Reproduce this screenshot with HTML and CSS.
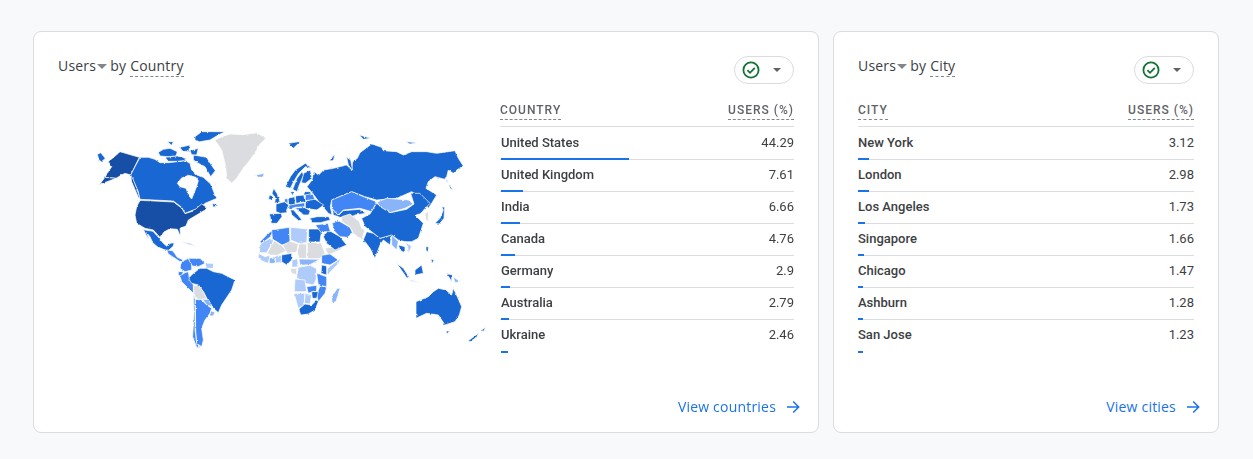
FILE: index.html
```html
<!DOCTYPE html>
<html lang="en">
  <head>
    <meta charset="UTF-8" />
    <title>Users by Country</title>
    <link rel="stylesheet" href="styles.css">
  </head>
  <body>
    <div class="container">
      <section class="card card-country">
        <div class="card-head">
          <div class="card-title">
            <span>Users</span><span class="title-caret"></span><span class="title-by">by</span><span class="dashed">Country</span>
          </div>
          <div class="status-chip">
            <svg class="status-check" width="18" height="18" viewBox="0 0 18 18">
              <circle cx="9" cy="9" r="7.6" fill="none" stroke="#137333" stroke-width="1.8" />
              <path d="M5.4 9.2l2.6 2.6 4.8-5" fill="none" stroke="#137333" stroke-width="1.8" />
            </svg>
            <span class="chip-caret"></span>
          </div>
        </div>
        <div class="card-body">
          <svg class="world-map" width="434" height="260" viewBox="58 100 434 260">
            <defs>
              <filter id="coast" x="-3%" y="-3%" width="106%" height="106%" color-interpolation-filters="sRGB">
                <feTurbulence type="fractalNoise" baseFrequency="0.3" numOctaves="2" seed="4" />
                <feDisplacementMap in="SourceGraphic" scale="2.2" xChannelSelector="R" yChannelSelector="G" />
              </filter>
            </defs>
            <g filter="url(#coast)">
            <!-- north america -->
            <g transform="translate(90 120) scale(0.33333)">
              <path class="c-dark" d="M90 95L148 112 122 165 105 160 95 165 78 175 45 172 55 155 65 140 55 125 85 100Z" />
              <path class="c-dark" d="M122 165L128 170 150 235 145 232 125 185Z" />
              <path class="c-dark" d="M45 172L78 175 28 194Z" />
              <path class="c-main" d="M22 103L32 98 46 115 34 126 26 118Z" />
              <path class="c-main" d="M150 112L175 112 195 118 210 128 235 128 262 125 285 122 300 130 305 150 322 166 340 172 362 192 375 225 381 235 345 250 330 265 310 270 285 280 275 262 250 243 150 238 145 215 130 180 122 165ZM262 190L270 200 288 205 295 225 305 237 318 205 325 182 318 172 295 166 275 174Z" fill-rule="evenodd" />
              <path class="c-main" d="M315 50L335 35 405 35 385 45 360 60 325 66 315 60Z" />
              <path class="c-main" d="M205 97L220 88 240 85 262 95 258 108 232 110 210 108Z" />
              <path class="c-main" d="M225 112L262 108 290 116 280 122 262 124 235 124Z" />
              <path class="c-main" d="M310 105L350 112 362 132 376 152 362 170 345 140 322 128 310 120Z" />
              <path class="c-main" d="M232 65L250 65 245 76Z" />
              <path class="c-main" d="M270 82L300 75 296 95 276 92Z" />
              <path class="c-main" d="M300 92L325 85 320 105 305 104Z" />
              <path class="c-main" d="M366 250L385 256 370 262Z" />
              <path class="c-gray" d="M375 60L395 50 420 42 460 44 500 38 528 55 510 72 500 90 480 120 460 145 440 175 425 190 410 175 408 150 405 130 395 90Z" />
              <path class="c-light" d="M498 165L522 160 520 170 505 172Z" />
              <path class="c-dark" d="M150 241L250 246 275 264 285 281 310 273 335 252 350 262 345 270 320 285 295 300 288 318 270 325 272 350 262 328 240 326 222 336 210 352 190 330 165 325 140 310 135 285 140 260Z" />
            </g>
            <!-- central and south america, africa -->
            <g transform="translate(150 230) scale(0.33333)">
              <path class="c-main" d="M-15 0L9 4 28 25 40 40 52 50 60 40 72 38 70 48 55 62 40 58 22 50 8 38 0 20-10 8-2 30-12 14-20 -2Z" />
              <path class="c-mid" d="M50 60L68 62 82 82 100 90 92 96 75 85 55 72Z" />
              <path class="c-pale" d="M88 34L120 38 142 50 118 46Z" />
              <path class="c-mid" d="M95 95L115 85 125 105 125 120 105 125 90 115Z" />
              <path class="c-mid" d="M115 85L150 85 165 100 145 110 127 108Z" />
              <path class="c-soft" d="M165 100L190 100 190 115 170 115Z" />
              <path class="c-mid" d="M85 125L100 125 95 140 85 135Z" />
              <path class="c-mid" d="M90 138L105 128 115 125 118 145 130 165 130 190 115 175 95 155Z" />
              <path class="c-main" d="M115 145L130 130 150 115 170 115 190 125 215 130 235 140 255 150 250 165 245 180 225 210 215 225 205 248 190 235 180 220 170 205 160 185 145 165 125 160Z" />
              <path class="c-gray" d="M130 170L145 165 160 185 170 205 155 210 135 205Z" />
              <path class="c-light" d="M158 208L175 208 187 230 170 225Z" />
              <path class="c-mid" d="M136 208L155 210 170 225 185 235 180 250 165 270 155 295 160 330 155 350 140 340 137 300Z" />
              <path class="c-mid" d="M130 190L135 208 135 300 140 340 152 355 170 357 140 352 128 320 132 250Z" />
              <path class="c-light" d="M182 243L195 245 190 258 180 258Z" />

              <path class="c-mid" d="M330 35L355 10 372 -2 362 20 335 40Z" />
              <path class="c-soft" d="M330 42L360 25 370 35 350 68 328 68Z" />
              <path class="c-mid" d="M365 0L418 -8 420 38 396 45 367 27Z" />
              <path class="c-soft" d="M422 -8L473 -3 470 38 446 40 422 30Z" />
              <path class="c-main" d="M476 -3L515 -3 510 36 476 36Z" />
              <path class="c-gray" d="M372 32L395 47 410 62 382 76 360 75 352 70Z" />
              <path class="c-gray" d="M398 46L420 34 445 42 440 66 412 70Z" />
              <path class="c-gray" d="M447 42L470 42 470 85 447 85 442 66Z" />
              <path class="c-gray" d="M472 38L513 38 525 70 510 86 472 86Z" />
              <path class="c-gray" d="M525 55L582 45 570 60 535 75Z" />
              <path class="c-soft" d="M325 70L345 80 360 76 355 100 340 95 325 85Z" />
              <path class="c-light" d="M358 85L375 80 375 100 358 100Z" />
              <path class="c-soft" d="M376 78L394 76 394 96 376 100Z" />
              <path class="c-main" d="M395 75L425 70 425 90 410 105 395 95Z" />
              <path class="c-soft" d="M426 90L442 86 446 110 426 112Z" />
              <path class="c-light" d="M447 87L510 88 480 104 450 106Z" />
              <path class="c-mid" d="M515 76L540 72 565 90 540 105 515 100Z" />
              <path class="c-soft" d="M545 105L572 85 566 100 532 135 532 116Z" />
              <path class="c-main" d="M515 105L530 108 530 135 513 130Z" />
              <path class="c-gray" d="M420 115L440 115 440 135 425 130Z" />
              <path class="c-soft" d="M445 112L480 106 500 116 498 150 490 165 465 160 440 145Z" />
              <path class="c-mid" d="M500 130L530 140 530 170 505 165Z" />
              <path class="c-soft" d="M435 147L465 150 470 185 433 185Z" />
              <path class="c-mid" d="M470 170L500 166 500 180 475 190Z" />
              <path class="c-mid" d="M510 167L530 172 525 190 505 215 500 195Z" />
              <path class="c-soft" d="M432 190L465 190 462 225 445 235Z" />
              <path class="c-soft" d="M466 190L485 195 480 222 463 220Z" />
              <path class="c-main" d="M485 185L505 185 500 205 487 205Z" />
              <path class="c-main" d="M447 237L465 222 485 225 500 210 505 215 495 240 475 252 452 255Z" />
              <path class="c-light" d="M562 175L570 175 558 215 546 218 545 200Z" />
              <path class="c-main" d="M520 20L535 0 570 20 590 45 555 60 530 40Z" />
            </g>
            <!-- russia and central asia -->
            <g transform="translate(280 120) scale(0.33333)">
              <path class="c-main" d="M81 200L96 180 101 155 116 165 130 150 160 145 200 135 215 150 218 125 232 115 240 98 275 72 305 82 310 92 350 95 370 105 395 95 440 95 470 100 525 92 535 115 550 138 530 150 520 160 505 150 500 170 495 175 505 190 520 212 510 205 502 180 465 170 445 185 438 205 470 225 455 250 445 265 420 230 395 215 350 235 290 240 255 230 215 215 155 240 151 260 156 285 145 280 120 250 98 220Z" />
              <path class="c-main" d="M148 122L180 84 165 102 160 122Z" />
              <path class="c-main" d="M200 112L212 120 218 152 205 135Z" />
              <path class="c-main" d="M25 70L62 64 40 85Z" />
              <path class="c-main" d="M238 45L272 55 250 58Z" />
              <path class="c-main" d="M378 65L412 68 390 72Z" />
              <path class="c-mid" d="M155 240L215 215 255 232 290 245 275 275 240 265 190 270 175 285 155 265Z" />
              <path class="c-main" d="M158 268L175 287 190 272 238 268 258 280 225 285 205 296 180 292 160 285Z" />
            </g>
            <!-- europe -->
            <g transform="translate(262 160) scale(0.33333)">
              <path class="c-main" d="M35 85L45 100 55 125 38 130 40 115 30 100Z" />
              <path class="c-main" d="M22 105L32 108 30 120 20 118Z" />
              <path class="c-main" d="M22 162L58 160 60 170 45 190 28 190Z" />
              <path class="c-main" d="M42 132L68 125 80 135 74 150 75 158 55 160 42 155Z" />
              <path class="c-main" d="M78 115L98 110 100 135 80 135Z" />
              <path class="c-mid" d="M67 118L77 115 78 130 69 127Z" />
              <path class="c-main" d="M100 108L125 105 130 125 102 130Z" />
              <path class="c-main" d="M130 125L155 115 185 135 165 150 130 145Z" />
              <path class="c-main" d="M85 150L95 150 120 180 110 182 90 165Z" />
              <path class="c-mid" d="M80 136L102 132 128 128 128 140 100 142 82 148Z" />
              <path class="c-main" d="M100 144L128 143 145 152 140 165 125 165Z" />
              <path class="c-main" d="M143 175L165 170 200 170 205 180 175 188 150 188Z" />
              <path class="c-main" d="M128 95L145 95 150 108 125 105Z" />
              <path class="c-mid" d="M130 105L152 100 158 118 130 122Z" />
              <path class="c-main" d="M70 80L85 50 100 30 130 10 150 25 130 20 110 40 95 65 85 85Z" />
              <path class="c-main" d="M92 88L105 55 120 35 125 45 112 75 105 95Z" />
              <path class="c-main" d="M125 40L145 30 150 55 130 70 118 68Z" />
              <path class="c-main" d="M85 95L95 95 92 108Z" />
              <path class="c-mid" d="M160 195L198 190 205 215 175 215Z" />
            </g>
            <!-- south and east asia -->
            <g transform="translate(340 190) scale(0.33333)">
              <path class="c-mid" d="M-24 100L-5 92 30 112 38 130 22 142 0 140-15 125Z" />
              <path class="c-gray" d="M5 80L30 72 58 95 65 115 75 120 65 150 40 130 32 112 5 95Z" />
              <path class="c-main" d="M70 150L80 125 100 130 120 145 155 135 150 165 130 150 120 165 105 205 90 175 75 155Z" />
              <path class="c-main" d="M65 85L90 72 110 40 150 68 200 58 222 42 212 10 240 10 270 40 240 72 225 75 250 100 235 145 215 155 195 155 175 150 155 135 120 145 95 125 75 110Z" />
              <path class="c-light" d="M112 36L140 25 205 30 220 42 195 55 150 68 120 50Z" />
              <path class="c-gray" d="M255 70L265 65 265 95 258 90Z" />
              <path class="c-main" d="M285 100L300 85 310 60 305 50 314 52 312 85 298 102Z" />
              <path class="c-light" d="M155 135L175 155 170 180 155 165Z" />
              <path class="c-main" d="M175 165L195 170 195 190 180 180Z" />
              <path class="c-soft" d="M195 155L215 170 205 190 203 170Z" />
            </g>
            <!-- oceania -->
            <g transform="translate(340 230) scale(0.33333)">
              <path class="c-main" d="M170 100L190 115 210 145 200 143Z" />
              <path class="c-main" d="M225 120L245 105 250 130 225 135Z" />
              <path class="c-main" d="M205 150L240 155 215 154Z" />
              <path class="c-main" d="M258 50L265 50 265 65 258 62Z" />
              <path class="c-main" d="M272 88L282 90 278 100Z" />
              <path class="c-main" d="M320 130L335 135 335 155Z" />
              <path class="c-light" d="M340 140L360 155 345 158Z" />
              <path class="c-main" d="M228 215L265 200 280 185 295 175 318 180 335 195 340 175 352 200 365 230 358 255 345 275 315 285 295 255 260 250 228 265Z" />
              <path class="c-main" d="M318 303L328 303 322 312Z" />
              <path class="c-main" d="M385 332L415 310 410 322 390 335Z" />
              <path class="c-main" d="M425 300L437 292 430 305Z" />
            </g>
            </g>
          </svg>
          <div class="data-table">
            <div class="table-head">
              <span class="dashed">COUNTRY</span>
              <span class="dashed">USERS (%)</span>
            </div>
            <div class="table-row">
              <div class="row-text"><span class="row-name">United States</span><span>44.29</span></div>
              <div class="row-bar" style="width: 43.6%"></div>
            </div>
            <div class="table-row">
              <div class="row-text"><span class="row-name">United Kingdom</span><span>7.61</span></div>
              <div class="row-bar" style="width: 7.5%"></div>
            </div>
            <div class="table-row">
              <div class="row-text"><span class="row-name">India</span><span>6.66</span></div>
              <div class="row-bar" style="width: 6.6%"></div>
            </div>
            <div class="table-row">
              <div class="row-text"><span class="row-name">Canada</span><span>4.76</span></div>
              <div class="row-bar" style="width: 4.7%"></div>
            </div>
            <div class="table-row">
              <div class="row-text"><span class="row-name">Germany</span><span>2.9</span></div>
              <div class="row-bar" style="width: 2.9%"></div>
            </div>
            <div class="table-row">
              <div class="row-text"><span class="row-name">Australia</span><span>2.79</span></div>
              <div class="row-bar" style="width: 2.8%"></div>
            </div>
            <div class="table-row">
              <div class="row-text"><span class="row-name">Ukraine</span><span>2.46</span></div>
              <div class="row-bar" style="width: 2.4%"></div>
            </div>
          </div>
        </div>
        <a class="card-link" href="#">View countries
          <svg width="14" height="14" viewBox="0 0 14 14"><path d="M1 7h11.5M7.2 1.5L12.7 7l-5.5 5.5" fill="none" stroke="#1a73e8" stroke-width="1.5" /></svg>
        </a>
      </section>

      <section class="card card-city">
        <div class="card-head">
          <div class="card-title">
            <span>Users</span><span class="title-caret"></span><span class="title-by">by</span><span class="dashed">City</span>
          </div>
          <div class="status-chip">
            <svg class="status-check" width="18" height="18" viewBox="0 0 18 18">
              <circle cx="9" cy="9" r="7.6" fill="none" stroke="#137333" stroke-width="1.8" />
              <path d="M5.4 9.2l2.6 2.6 4.8-5" fill="none" stroke="#137333" stroke-width="1.8" />
            </svg>
            <span class="chip-caret"></span>
          </div>
        </div>
        <div class="card-body">
          <div class="data-table">
            <div class="table-head">
              <span class="dashed">CITY</span>
              <span class="dashed">USERS (%)</span>
            </div>
            <div class="table-row">
              <div class="row-text"><span class="row-name">New York</span><span>3.12</span></div>
              <div class="row-bar" style="width: 3.4%"></div>
            </div>
            <div class="table-row">
              <div class="row-text"><span class="row-name">London</span><span>2.98</span></div>
              <div class="row-bar" style="width: 3.3%"></div>
            </div>
            <div class="table-row">
              <div class="row-text"><span class="row-name">Los Angeles</span><span>1.73</span></div>
              <div class="row-bar" style="width: 2%"></div>
            </div>
            <div class="table-row">
              <div class="row-text"><span class="row-name">Singapore</span><span>1.66</span></div>
              <div class="row-bar" style="width: 1.8%"></div>
            </div>
            <div class="table-row">
              <div class="row-text"><span class="row-name">Chicago</span><span>1.47</span></div>
              <div class="row-bar" style="width: 1.6%"></div>
            </div>
            <div class="table-row">
              <div class="row-text"><span class="row-name">Ashburn</span><span>1.28</span></div>
              <div class="row-bar" style="width: 1.5%"></div>
            </div>
            <div class="table-row">
              <div class="row-text"><span class="row-name">San Jose</span><span>1.23</span></div>
              <div class="row-bar" style="width: 1.4%"></div>
            </div>
          </div>
        </div>
        <a class="card-link" href="#">View cities
          <svg width="14" height="14" viewBox="0 0 14 14"><path d="M1 7h11.5M7.2 1.5L12.7 7l-5.5 5.5" fill="none" stroke="#1a73e8" stroke-width="1.5" /></svg>
        </a>
      </section>
    </div>
  </body>
</html>
```

FILE: styles.css
```css
body {
  font-family: Roboto, Arial, sans-serif;
  margin: 0;
  padding: 0;
  background-color: #f8f9fa;
  color: #3c4043;
}
.container {
  display: flex;
  gap: 14px;
  padding: 31px 33px 26px 33px;
}
.card {
  display: flex;
  flex-direction: column;
  box-sizing: border-box;
  height: 402px;
  background-color: #fff;
  border: 1px solid #dadce0;
  border-radius: 8px;
  padding: 24px 24px 15px;
}
.card-country {
  width: 786px;
}
.card-city {
  width: 386px;
}
.card-head {
  display: flex;
  justify-content: space-between;
  align-items: flex-start;
  height: 44px;
}
.card-title {
  display: flex;
  align-items: flex-start;
  font-family: "Open Sans", Arial, sans-serif;
  font-size: 14px;
  line-height: 20px;
  letter-spacing: 0.2px;
  color: #3c4043;
}
.title-caret {
  width: 0;
  height: 0;
  margin: 8px 3px 0 1px;
  border-left: 5.5px solid transparent;
  border-right: 5.5px solid transparent;
  border-top: 5px solid #80868b;
}
.title-by {
  margin-right: 4px;
}
.dashed {
  border-bottom: 1px dashed #80868b;
}
.status-chip {
  display: flex;
  align-items: center;
  box-sizing: border-box;
  width: 60px;
  height: 28px;
  padding-left: 7px;
  border: 1px solid #dadce0;
  border-radius: 14px;
}
.chip-caret {
  width: 0;
  height: 0;
  margin-left: 13px;
  border-left: 4.5px solid transparent;
  border-right: 4.5px solid transparent;
  border-top: 4.5px solid #5f6368;
}
.card-body {
  display: flex;
  justify-content: space-between;
  flex-grow: 1;
}
.world-map {
  flex-shrink: 0;
  overflow: visible;
}
.world-map path {
  stroke: #fff;
  stroke-width: 0.7;
  vector-effect: non-scaling-stroke;
  stroke-linejoin: round;
}
.c-dark { fill: #174ea6; }
.c-main { fill: #1967d2; }
.c-mid { fill: #4285f4; }
.c-light { fill: #8ab4f8; }
.c-soft { fill: #aecbfa; }
.c-pale { fill: #d2e3fc; }
.c-gray { fill: #dadce0; }
.data-table {
  flex-grow: 1;
  font-size: 13px;
}
.card-country .data-table {
  flex-grow: 0;
  width: 294px;
}
.table-head {
  display: flex;
  justify-content: space-between;
  align-items: flex-start;
  box-sizing: border-box;
  height: 27px;
  margin-bottom: 1px;
  padding-top: 2px;
  border-bottom: 1px solid #dadce0;
  font-size: 12px;
  font-weight: 500;
  line-height: 16px;
  letter-spacing: 1px;
  color: #5f6368;
}
.table-head .dashed {
  padding-bottom: 1px;
}
.table-row {
  display: flex;
  flex-direction: column;
  box-sizing: border-box;
  height: 32px;
  border-bottom: 1px solid #dadce0;
}
.table-row:last-child {
  border-bottom: none;
}
.row-text {
  display: flex;
  justify-content: space-between;
  flex-grow: 1;
  padding-top: 7px;
  line-height: 16px;
}
.row-name {
  font-weight: 500;
}
.card-country .row-name,
.card-country .row-bar {
  margin-left: 1px;
}
.row-bar {
  height: 2px;
  margin-bottom: -1px;
  background-color: #1a73e8;
}
.card-link {
  display: flex;
  justify-content: flex-end;
  align-items: center;
  gap: 10px;
  margin-right: -6px;
  font-family: "Open Sans", Arial, sans-serif;
  font-size: 14px;
  line-height: 20px;
  letter-spacing: 0.2px;
  color: #1a73e8;
  text-decoration: none;
}
```
